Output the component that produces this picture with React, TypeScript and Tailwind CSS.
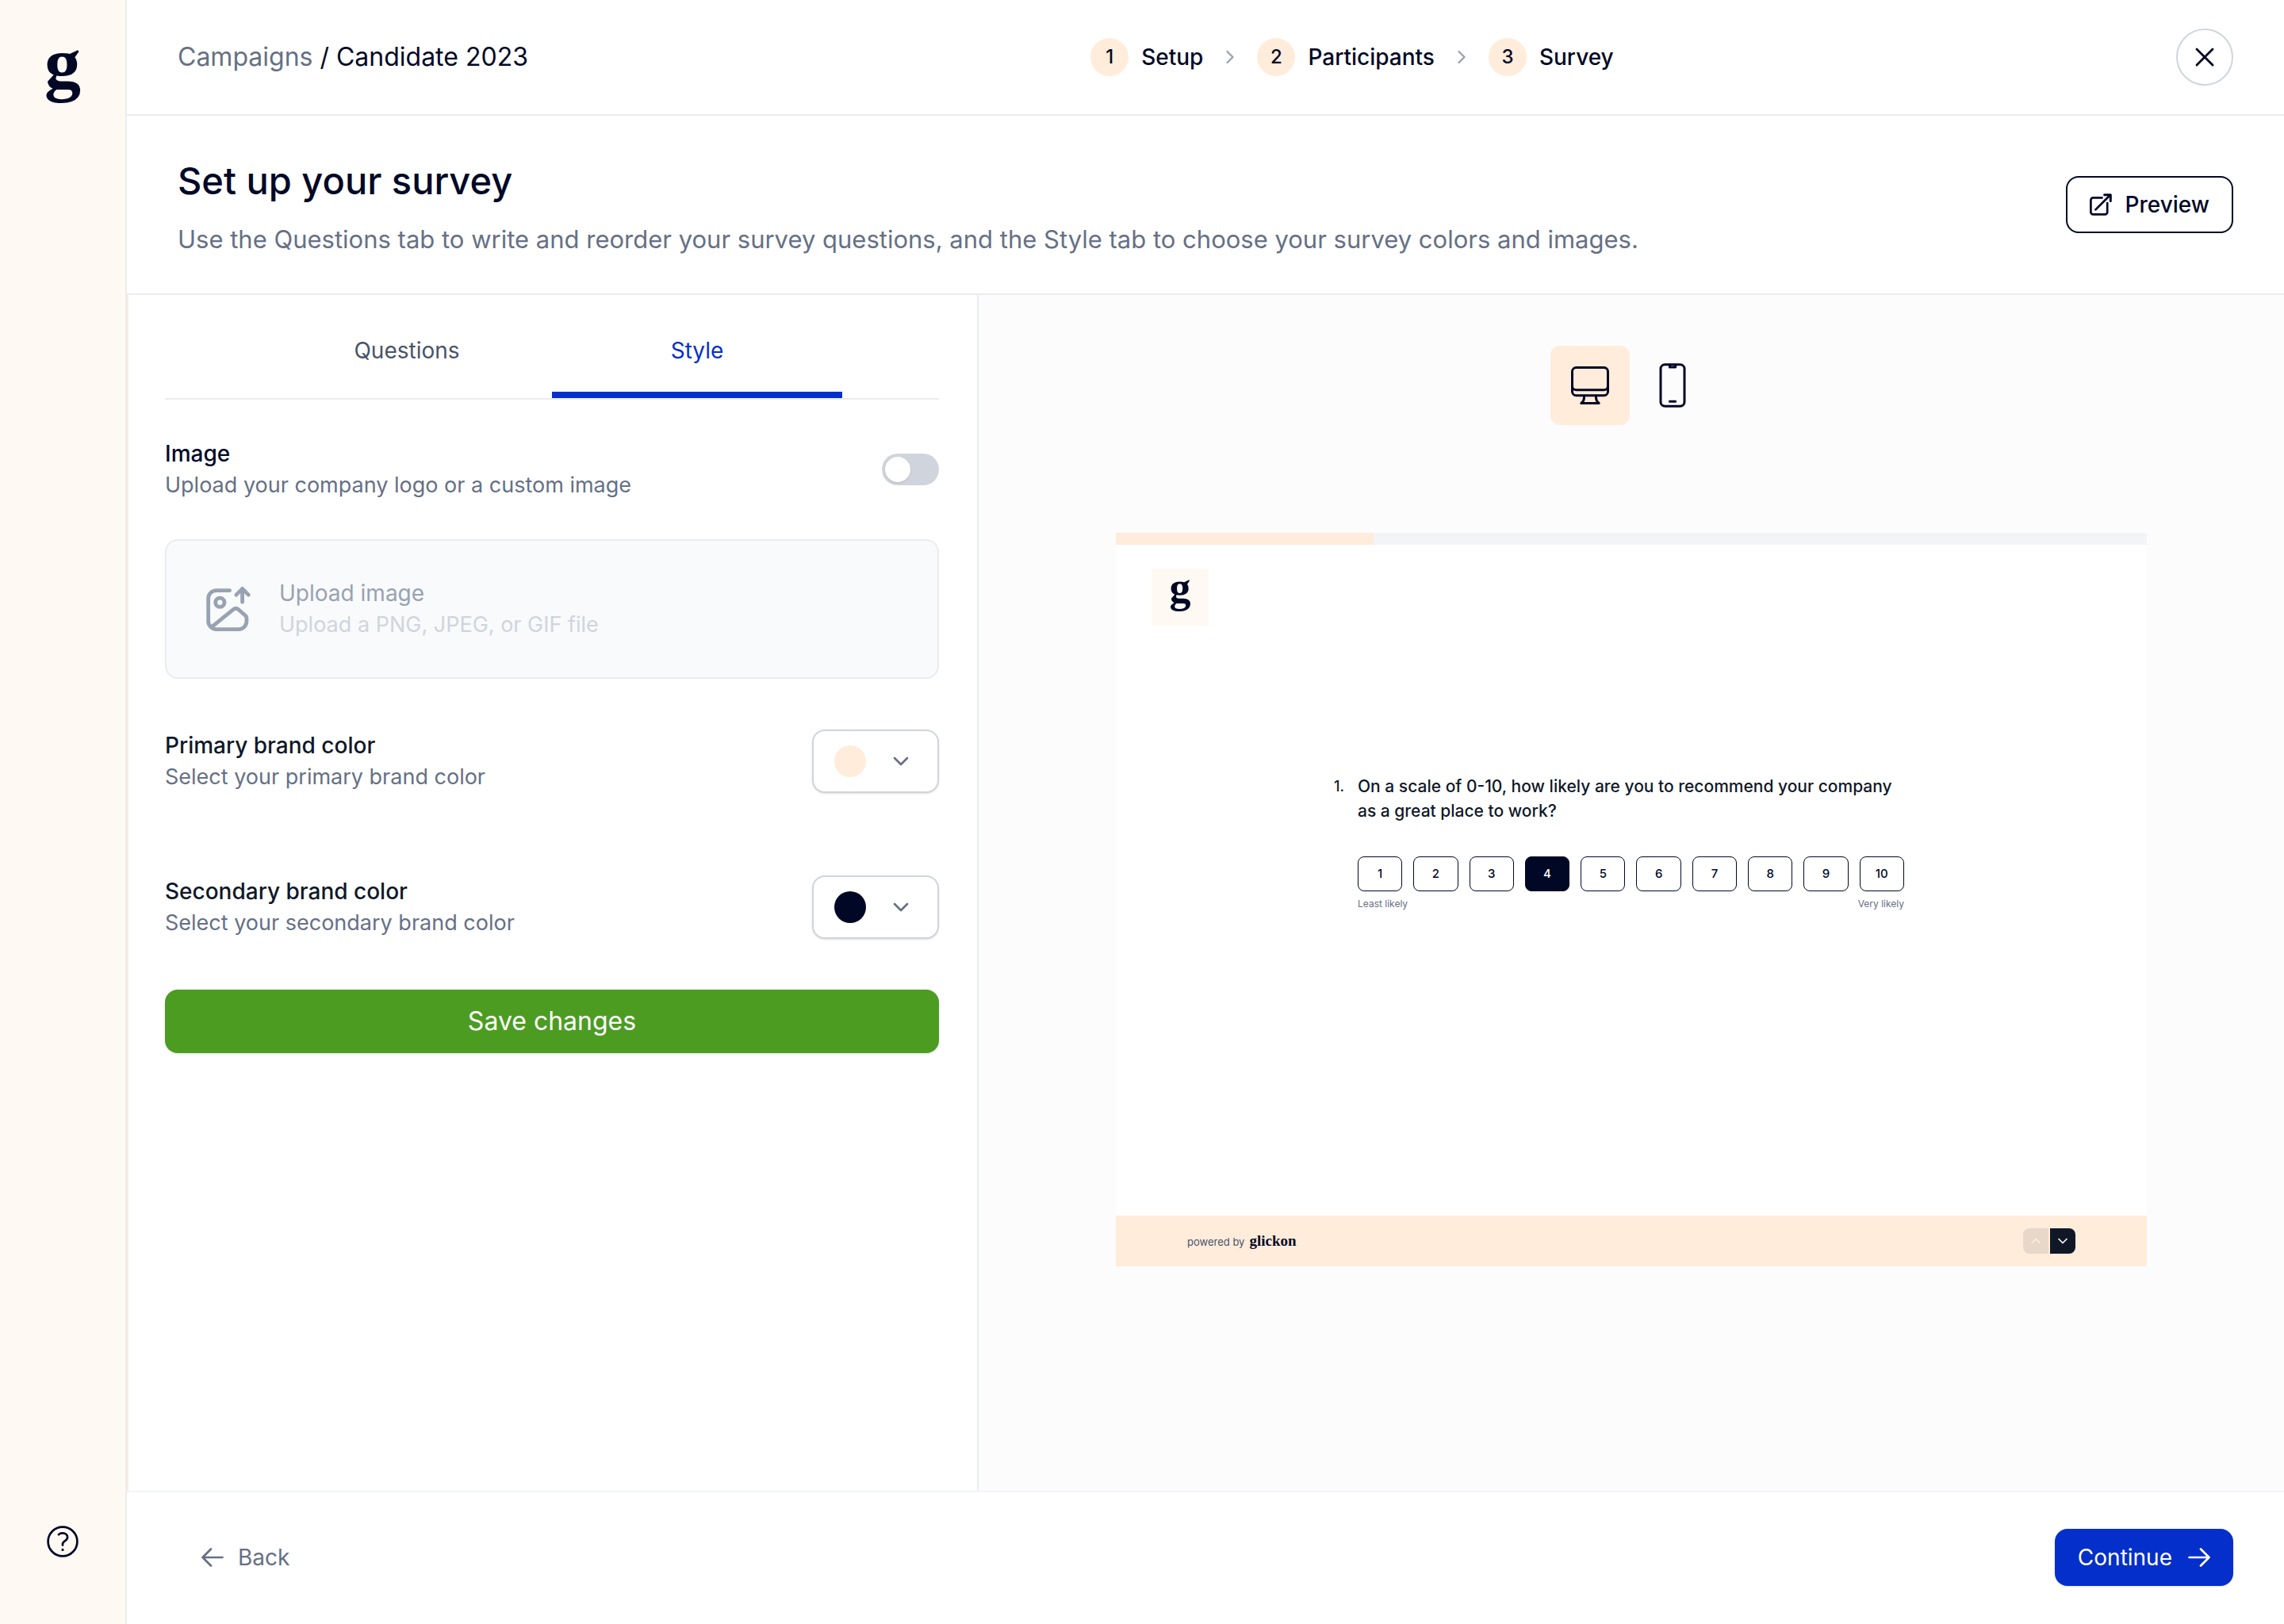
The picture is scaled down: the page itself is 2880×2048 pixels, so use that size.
import React, { useState } from "react";
import { ChevronDown, ChevronRight, ChevronUp, X } from "lucide-react";

const STEPS = ["Setup", "Participants", "Survey"];
const SCORES = [1, 2, 3, 4, 5, 6, 7, 8, 9, 10];

function ExternalIcon() {
  return (
    <svg width="28" height="28" viewBox="0 0 28 28" fill="none" stroke="currentColor" strokeWidth="2.7" strokeLinecap="round" strokeLinejoin="round" aria-hidden="true">
      <path d="M15.5 5.4H4.4a3 3 0 0 0-3 3v15a3 3 0 0 0 3 3h14.8a3 3 0 0 0 3-3V12" />
      <path d="M7.4 20.4 25 2.8" />
      <path d="M18.6 1.7h7.7v7.7" strokeWidth="3" />
    </svg>
  );
}

function ArrowIcon({ flip = false }: { flip?: boolean }) {
  return (
    <svg width="28" height="24" viewBox="0 0 28 24" fill="none" stroke="currentColor" strokeWidth="2.7" strokeLinecap="round" strokeLinejoin="round" aria-hidden="true">
      {flip ? <path d="M1.5 12h25M16 1.5 26.5 12 16 22.5" /> : <path d="M26.5 12h-25M12 1.5 1.5 12 12 22.5" />}
    </svg>
  );
}

function ImageUpIcon() {
  return (
    <svg width="64" height="64" viewBox="0 0 24 24" fill="none" stroke="currentColor" strokeWidth="1.8" strokeLinecap="round" strokeLinejoin="round" aria-hidden="true">
      <path d="M12.6 3.2H6.3a3.8 3.8 0 0 0-3.8 3.8v10.8a3.8 3.8 0 0 0 3.8 3.8h10.5a3.8 3.8 0 0 0 3.8-3.8v-1.6c0-.5-.2-.8-.6-1.1l-3.3-2.9c-.8-.7-1.6-.7-2.4 0L4 20.6" />
      <circle cx="8" cy="8.9" r="2.1" />
      <path d="M18.6 8.7V2.4M15.7 5.3l2.9-2.9 2.9 2.9" />
    </svg>
  );
}

function MonitorIcon() {
  return (
    <svg width="48" height="48" viewBox="0 0 48 48" fill="none" stroke="currentColor" strokeWidth="3" strokeLinecap="round" strokeLinejoin="round" aria-hidden="true">
      <rect x="1.5" y="1.5" width="45" height="35.2" rx="5" />
      <path d="M1.5 24.7a5 5 0 0 0 5 5h35a5 5 0 0 0 5-5" />
      <path d="M16.5 37v2.5c0 3-1 5-3.7 7h22.4c-2.7-2-3.7-4-3.7-7V37" />
    </svg>
  );
}

function PhoneIcon() {
  return (
    <svg width="34" height="56" viewBox="0 0 34 56" fill="none" stroke="currentColor" strokeWidth="3" strokeLinecap="round" strokeLinejoin="round" aria-hidden="true">
      <rect x="2" y="1.8" width="30" height="52.4" rx="5.5" />
      <path d="M13.4 2v3h7.2V2M13.4 48.3h7.2" />
    </svg>
  );
}

function HelpIcon() {
  return (
    <svg width="40" height="40" viewBox="0 0 40 40" fill="none" stroke="currentColor" strokeWidth="2.7" strokeLinecap="round" strokeLinejoin="round" aria-hidden="true">
      <circle cx="20" cy="20" r="18.4" />
      <path d="M15 11.2c1.2-1.3 2.8-1.9 4.8-1.9 3.6 0 6.3 2.1 6.3 5.3 0 2.2-1.2 3.4-3 4.6-2 1.3-3.1 2.2-3.1 4v1.4" />
      <circle cx="20" cy="30.4" r="1.6" fill="currentColor" stroke="none" />
    </svg>
  );
}

function ColorRow({ title, hint, swatch }: { title: string; hint: string; swatch: string }) {
  return (
    <div className="flex items-center justify-between">
      <div className="leading-10">
        <h2 className="text-[28px] font-medium text-[#101828]">{title}</h2>
        <p className="text-[27px] text-[#667085]">{hint}</p>
      </div>
      <button
        type="button"
        aria-label={title}
        aria-haspopup="listbox"
        className="flex h-20 w-40 items-center gap-7 rounded-2xl border-2 border-[#d0d5dd] bg-white pl-[26px] text-[#667085] shadow-sm"
      >
        <span className={`size-10 rounded-full ${swatch}`} />
        <ChevronDown size={32} strokeWidth={2} />
      </button>
    </div>
  );
}

export default function App() {
  const [tab, setTab] = useState("Style");
  const [score, setScore] = useState(4);
  const [device, setDevice] = useState("desktop");

  return (
    <div className="flex min-h-screen bg-white font-['Inter',sans-serif] text-[#000826]">
      <aside className="flex w-40 shrink-0 flex-col items-center justify-between border-r-2 border-[#eaecf0] bg-[#fff9f3] pt-8 pb-[84px]">
        <a href="#home" className="font-['Liberation_Serif',serif] text-[92px] leading-[96px] font-bold">
          g
        </a>
        <button type="button" aria-label="Help">
          <HelpIcon />
        </button>
      </aside>

      <div className="flex min-w-0 flex-1 flex-col">
        <header className="flex h-[146px] items-center justify-between border-b-2 border-[#eaecf0] px-16">
          <nav aria-label="Breadcrumb" className="text-[32px] leading-10">
            <a href="#campaigns" className="text-[#667085]">
              Campaigns
            </a>{" "}
            / Candidate 2023
          </nav>
          <ol className="flex items-center gap-5 text-[28px] font-medium">
            {STEPS.map((step, i) => (
              <li key={step} className="flex items-center gap-5">
                {i > 0 && <ChevronRight size={28} strokeWidth={2} className="text-[#98a2b3]" />}
                <span className="flex items-center gap-4">
                  <span className="flex size-12 items-center justify-center rounded-full bg-[#ffecdb] text-2xl">{i + 1}</span>
                  {step}
                </span>
              </li>
            ))}
          </ol>
          <button type="button" aria-label="Close" className="flex size-[72px] items-center justify-center rounded-full border-2 border-[#d0d5dd]">
            <X size={40} strokeWidth={1.7} />
          </button>
        </header>

        <section className="flex items-center justify-between border-b-2 border-[#eaecf0] px-16 py-11">
          <div className="flex flex-col gap-3">
            <h1 className="text-[47px] leading-[76px] font-medium">Set up your survey</h1>
            <p className="text-[31px] leading-[48px] text-[#667085]">
              Use the Questions tab to write and reorder your survey questions, and the Style tab to choose your survey colors and images.
            </p>
          </div>
          <button type="button" className="flex h-[72px] items-center gap-4 rounded-2xl border-2 border-[#000826] px-7 text-[28px] font-medium">
            <ExternalIcon />
            Preview
          </button>
        </section>

        <main className="grid flex-1 grid-cols-[537fr_823fr]">
          <section className="border-r-2 border-l-2 border-r-[#eaecf0] border-l-[#ffecdb] pt-10 pr-12 pl-[46px]">
            <div role="tablist" className="flex justify-center border-b-2 border-[#eaecf0]">
              {["Questions", "Style"].map((name) => (
                <button
                  key={name}
                  type="button"
                  role="tab"
                  aria-selected={tab === name}
                  onClick={() => setTab(name)}
                  className={`w-3/8 border-b-8 pb-[22px] text-[28px] leading-[60px] ${
                    tab === name ? "border-[#042fca] text-[#042fca]" : "border-transparent text-[#475467]"
                  }`}
                >
                  {name}
                </button>
              ))}
            </div>

            <div className="mt-12 flex items-center justify-between">
              <label htmlFor="image-toggle" className="leading-10">
                <span className="block text-[28px] font-medium">Image</span>
                <span className="block text-[27px] text-[#667085]">Upload your company logo or a custom image</span>
              </label>
              <input
                id="image-toggle"
                type="checkbox"
                role="switch"
                className="h-10 w-[72px] appearance-none rounded-full bg-[#d0d5dd] p-1 before:block before:size-8 before:rounded-full before:bg-white before:shadow-sm checked:bg-[#042fca] checked:before:ml-8"
              />
            </div>

            <button type="button" disabled className="mt-12 flex h-44 w-full items-center gap-8 rounded-2xl border-2 border-[#eaecf0] bg-[#f9fafb] px-[46px] text-left leading-10 text-[#98a2b3]">
              <ImageUpIcon />
              <span>
                <span className="block text-[28px]">Upload image</span>
                <span className="block text-[27px] text-[#d0d5dd]">Upload a PNG, JPEG, or GIF file</span>
              </span>
            </button>

            <div className="mt-16 flex flex-col gap-[104px]">
              <ColorRow title="Primary brand color" hint="Select your primary brand color" swatch="bg-[#ffecdb]" />
              <ColorRow title="Secondary brand color" hint="Select your secondary brand color" swatch="bg-[#000826]" />
            </div>

            <button type="button" className="mt-16 h-20 w-full rounded-2xl bg-[#4c9c22] text-[32px] text-white shadow-sm">
              Save changes
            </button>
          </section>

          <section className="flex flex-col items-center bg-[#fcfcfc] pt-16">
            <div className="flex gap-1">
              <button
                type="button"
                aria-label="Desktop preview"
                aria-pressed={device === "desktop"}
                onClick={() => setDevice("desktop")}
                className={`flex size-[100px] items-center justify-center rounded-xl ${device === "desktop" ? "bg-[#ffecdb]" : ""}`}
              >
                <MonitorIcon />
              </button>
              <button
                type="button"
                aria-label="Mobile preview"
                aria-pressed={device === "mobile"}
                onClick={() => setDevice("mobile")}
                className={`flex size-[100px] items-center justify-center rounded-xl ${device === "mobile" ? "bg-[#ffecdb]" : ""}`}
              >
                <PhoneIcon />
              </button>
            </div>

            <div className="mt-[136px] flex h-[925px] w-[1300px] flex-col bg-white">
              <div className="h-[15px] bg-[#f2f4f7]">
                <div className="h-full w-1/4 bg-[#ffecdb]" />
              </div>
              <div className="mt-[30px] ml-[45px] size-[72px] bg-[#fff9f3] text-center font-['Liberation_Serif',serif] text-[54px] leading-[48px] font-bold">
                g
              </div>

              <div className="mt-[187px] mr-[306px] ml-[275px] grid grid-cols-[30px_1fr]">
                <span className="text-lg leading-[31px] font-medium text-[#101828]">1.</span>
                <div>
                  <p className="text-[21px] leading-[31px] font-medium text-[#101828]">
                    On a scale of 0-10, how likely are you to recommend your company
                    <br />
                    as a great place to work?
                  </p>
                  <div className="mt-[42px] flex gap-[14px]">
                    {SCORES.map((n) => (
                      <button
                        key={n}
                        type="button"
                        aria-pressed={score === n}
                        onClick={() => setScore(n)}
                        className={`h-11 flex-1 rounded-lg border border-[#000826] text-[15px] font-medium ${score === n ? "bg-[#000826] text-white" : "bg-white"}`}
                      >
                        {n}
                      </button>
                    ))}
                  </div>
                  <div className="mt-[6px] flex justify-between text-xs leading-5 text-[#667085]">
                    <span>Least likely</span>
                    <span>Very likely</span>
                  </div>
                </div>
              </div>

              <div className="mt-auto flex h-16 items-center justify-between bg-[#ffecdb] px-[90px]">
                <p className="flex items-baseline gap-[6px] text-[13px] text-[#475467]">
                  powered by
                  <span className="font-['Liberation_Serif',serif] text-[19px] font-bold text-[#000826]">glickon</span>
                </p>
                <div className="flex gap-[2px]">
                  <button type="button" disabled aria-label="Previous question" className="flex size-8 items-center justify-center rounded-l-lg bg-[#e7d8c9] text-[#ffecdb]">
                    <ChevronUp size={20} strokeWidth={2} />
                  </button>
                  <button type="button" aria-label="Next question" className="flex size-8 items-center justify-center rounded-r-lg bg-[#101828] text-white">
                    <ChevronDown size={20} strokeWidth={2} />
                  </button>
                </div>
              </div>
            </div>
          </section>
        </main>

        <footer className="flex h-[168px] items-center justify-between border-t-2 border-[#f2f4f7] px-16 pb-0.5 text-[28px]">
          <button type="button" className="flex h-[72px] items-center gap-[18px] px-[30px] text-[#667085]">
            <ArrowIcon />
            Back
          </button>
          <button type="button" className="flex h-[72px] items-center gap-5 rounded-2xl bg-[#042fca] px-[29px] text-white shadow-sm">
            Continue
            <ArrowIcon flip />
          </button>
        </footer>
      </div>
    </div>
  );
}
